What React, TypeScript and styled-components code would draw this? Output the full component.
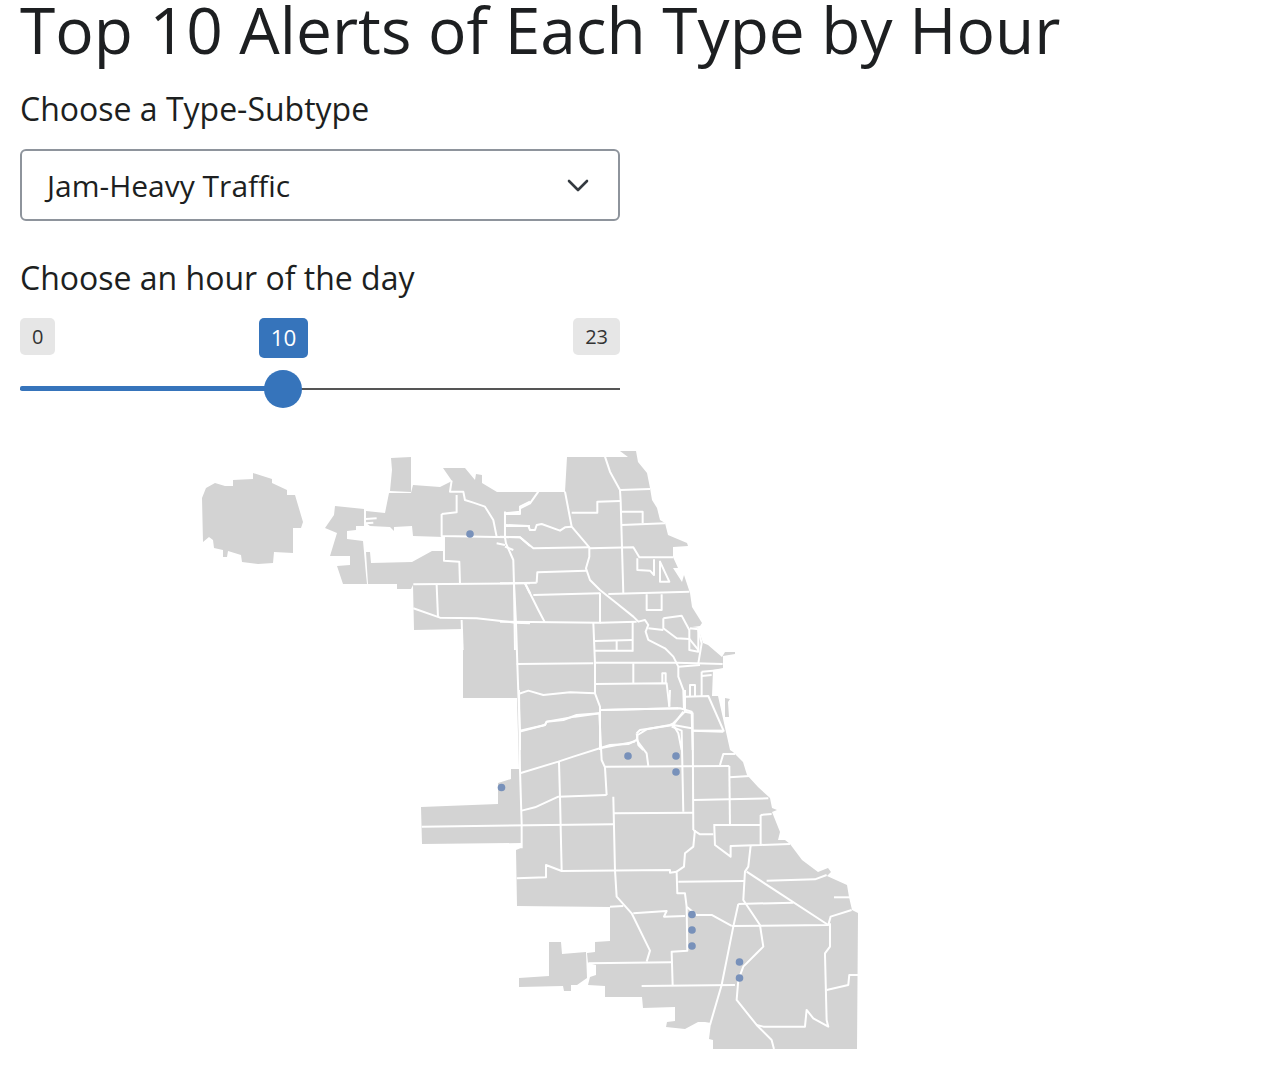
import styled, { createGlobalStyle } from 'styled-components';

const GlobalStyle = createGlobalStyle`
  html, body {
    margin: 0;
    padding: 0;
    background: #fff;
    color: #1d1f21;
    font-family: "Open Sans", "Noto Sans", sans-serif;
  }
`

const Page = styled.div`
  width: 1272px;
  height: 1068px;
  padding: 0 20px;
  box-sizing: border-box;
  overflow: hidden;
`
const Title = styled.h1`
  margin: 0;
  height: 93px;
  font-size: 64px;
  line-height: 60px;
  font-weight: 400;
  white-space: nowrap;
`
const Field = styled.div`
  width: 600px;
  display: flex;
  flex-direction: column;
`
const Label = styled.label`
  font-size: 32px;
  line-height: 32px;
  height: 32px;
  white-space: nowrap;
`
const SelectBox = styled.div`
  margin-top: 24px;
  height: 72px;
  box-sizing: border-box;
  border: 2px solid #8e949c;
  border-radius: 6px;
  padding: 0 28px 0 25px;
  display: flex;
  align-items: center;
  justify-content: space-between;
  font-size: 30px;
`
const HourField = styled(Field)`
  margin-top: 41px;
`
const Slider = styled.div`
  position: relative;
  margin-top: 24px;
  height: 72px;
`
const Bubbles = styled.div`
  display: flex;
  justify-content: space-between;
  align-items: flex-start;
`
const Bubble = styled.span`
  height: 37px;
  padding: 0 12px;
  box-sizing: border-box;
  border-radius: 5px;
  background: #e6e6e6;
  color: #333;
  font-size: 20px;
  line-height: 37px;
`
const ValueBubble = styled.span`
  position: absolute;
  top: 0;
  left: 239px;
  width: 49px;
  height: 40px;
  border-radius: 5px;
  background: #3674bb;
  color: #fff;
  font-size: 22.4px;
  line-height: 40px;
  text-align: center;
`
const Track = styled.div`
  position: absolute;
  left: 0;
  right: 0;
  top: 70px;
  height: 2px;
  background: #555;
`
const Fill = styled.div`
  position: absolute;
  left: 0;
  top: 68px;
  height: 5px;
  border-radius: 2px;
  background: #3674bb;
`
const Thumb = styled.div`
  position: absolute;
  top: 52px;
  left: 244px;
  width: 38px;
  height: 38px;
  border-radius: 50%;
  background: #3674bb;
`
const MapFigure = styled.svg`
  display: block;
  margin: 50px 0 0 170px;
`

const Chevron = () => (
  <svg width="24" height="24" viewBox="0 0 24 24" fill="none" stroke="#343a40" strokeWidth="2.6" strokeLinecap="round" strokeLinejoin="round">
    <path d="M3 8l9 9 9-9" />
  </svg>
)

// outline of the city, in page coordinates
const body =
  'M443 468 457 468 465 468 475 480 476 474 482 475 482 483 497 492 538 492 565 492 567 457 605 457 628 457 620 451 636 451 638 462 647 473 650 488 652 500 657 508 660 520 665 523 668 535 687 543 688 546 673 547 673 557 678 568 673 568 682 582 684 575 690 593 692 607 702 623 700 626 692 627 698 628 703 643 708 645 722 657 725 652 735 652 735 654 723 656 723 668 713 670 712 696 718 696 730 750 733 752 743 762 747 775 758 787 770 798 772 808 777 810 772 812 780 832 778 840 785 840 790 844 802 860 818 872 828 868 831 872 827 876 847 885 849 897 852 910 858 913 857 1049 713 1049 713 1040 709 1039 711 1023 705 1022 698 1022 685 1029 666 1027 667 1022 675 1021 675 1007 643 1008 642 997 605 997 605 986 588 985 590 977 596 975 596 965 588 963 587 953 595 952 595 942 610 941 610 907 517 906 516 850 521 848 521 843 422 844 421 807 498 804 498 783 511 779 511 769 519 769 517 698 463 698 463 629 414 630 413 585 411 589 397 589 397 584 368 584 366 552 370 552 371 563 412 562 432 551 443 551 444 537 413 536 412 526 394 527 394 531 390 527 370 526 366 523 366 511 385 513 389 493 411 493 413 485 440 487 452 481Z'
const westPark =
  'M202 498 206 488 215 483 225 486 233 486 233 480 253 479 253 473 272 479 272 483 287 490 287 495 295 495 303 522 301 528 293 528 293 553 274 552 273 563 258 564 242 562 241 555 228 551 227 557 223 557 223 550 214 548 213 540 209 537 203 542Z'
const westBlob =
  'M335 506 364 509 364 526 356 526 356 530 347 531 347 539 363 541 364 552 366 575 367 584 343 584 337 566 350 565 350 556 330 556 337 533 325 528 334 515Z'
const northBlock = 'M391 458 411 457 411 492 390 491 392 470Z'
const sliver = 'M725 698 730 699 728 702 729 717 725 717Z'
const southwestBlob = 'M519 978 549 976 549 942 561 942 562 954 586 952 587 978 577 985 571 985 571 991 564 991 563 986 519 987Z'

// street lines traced in 3x crops, one group per crop
const westLines = [
  'M785 122 780 155 820 155 825 180 850 188 885 200 910 240 920 290',
  'M755 222 800 217 800 165',
  'M755 222 755 288 990 292 1020 318',
  'M762 290 762 362 808 365 810 430',
  'M670 433 1020 430',
  'M740 435 744 530',
  'M670 505 750 533 860 535 975 548 1020 550',
  'M815 540 818 630',
  'M945 215 945 292 948 310 970 360 972 430 975 630',
  'M945 220 990 215 990 200 1020 185',
  'M945 258 1020 258',
  'M920 310 945 315',
  'M945 320 970 330',
  'M1005 430 1020 460',
  'M527 237 560 235',
  'M527 250 550 248',
]
const northLines = [
  'M115 155 90 190 60 205 60 222 15 222',
  'M15 215 15 295',
  'M15 255 85 258 90 270 105 270 110 255 125 252 180 272 195 262 215 260',
  'M195 155 215 260 268 322 268 350 258 385 270 420 300 450 350 490 400 530 415 545 435 540 445 555 437 575 445 600 495 625 520 650 535 680 535 710 550 750 552 810',
  'M0 290 60 292 100 325 268 322',
  'M215 218 292 218 292 185 360 183',
  'M315 50 330 95 360 150 362 183 370 460',
  'M360 150 450 147',
  'M365 215 428 215 428 250',
  'M365 255 495 250',
  'M268 325 400 322 418 352 520 352',
  'M412 355 412 390 450 392 462 405 462 358',
  'M480 365 480 425 508 425Z',
  'M110 428 112 397 258 392',
  'M0 430 110 428',
  'M300 458 300 548 0 545',
  'M100 465 300 460',
  'M75 430 115 510 135 548',
  'M325 462 568 455',
  'M440 463 440 510 485 510 485 463',
  'M300 548 410 545',
  'M280 548 285 670 285 760 300 800 300 930',
  'M285 603 398 600',
  'M350 603 350 632',
  'M285 632 398 632',
  'M398 545 398 635',
  'M285 668 530 668 668 672',
  'M50 672 280 670',
  'M490 535 545 527 568 570 568 630 595 635 595 568 570 565',
  'M490 535 490 565 530 595 568 597 595 630',
  'M445 565 490 570',
  'M595 570 605 610 595 670',
  'M400 670 400 730',
  'M285 732 500 730 508 800',
  'M487 730 487 700 497 700 497 730',
  'M605 695 665 690',
  'M605 708 635 705',
  'M605 695 605 768',
  'M570 768 570 735 585 735 585 768',
  'M555 770 625 768 672 875',
  'M535 680 600 675',
  'M300 810 540 805 575 815 578 930',
  'M520 855 550 815',
  'M520 855 575 865',
  'M580 872 670 872',
  'M410 880 420 870 520 855 535 880 545 930',
  'M410 880 415 915 430 930',
  'M300 925 405 905',
  'M55 762 85 752 130 765 210 757 285 760',
  'M60 875 135 855 140 845 225 830 300 820',
  'M42 430 48 550 52 672 55 760 60 875 60 930',
]
const southLines = [
  'M327 0 330 240 335 400 335 475',
  'M330 122 405 105 410 95 460 90 500 75 568 70',
  'M330 250 445 215 490 200 600 165 655 162 680 150',
  'M568 70 575 210 585 232 590 315',
  'M575 60 805 55',
  'M780 0 778 50',
  'M825 0 825 65 790 100 780 105 710 118 683 135 680 150 710 190 715 228',
  'M825 65 848 70 850 420',
  'M785 110 815 122 820 365',
  'M848 122 940 125',
  'M585 230 958 228',
  'M930 225 940 192 975 192',
  'M958 228 960 405',
  'M958 262 1020 258',
  'M850 330 1075 325',
  'M910 405 1050 405',
  'M1052 375 1052 465 962 468 962 500 915 465 913 408',
  'M1052 375 1085 372',
  'M1052 465 1140 462',
  'M1022 468 1015 530 1005 545 1000 630 1050 705 1060 770 1040 790 1000 830 985 870 980 930 1040 1005 1085 1050 1092 1077',
  'M1010 545 1255 705',
  'M850 420 870 433 910 433',
  'M855 420 850 470 825 490 822 530 800 545 802 610 825 610 830 650 860 675 905 675 965 708',
  'M805 575 1005 573',
  'M1070 572 1215 568 1250 555',
  'M1272 622 1320 622',
  'M985 642 1150 638',
  'M985 642 970 710 935 885 900 1005',
  'M965 708 1255 705 1262 680 1325 660',
  'M1260 700 1260 770 1245 790 1250 990 1255 1010 1210 985 1190 960 1185 1010 1060 1010 1040 1005',
  'M1345 855 1318 855 1315 885 1250 900',
  'M830 650 832 782 785 785 788 885',
  'M670 670 770 663 762 680 825 678',
  'M610 370 850 368',
  'M610 320 615 540 620 620 665 670 720 782 710 815',
  'M447 215 450 320 455 540',
  'M590 315 445 320 375 352 335 362',
  'M35 410 610 403',
  'M320 565 408 562 408 525 455 543 780 540 780 548 800 545',
  'M535 820 785 817',
  'M695 888 975 885',
  'M600 650 640 648',
]

const alerts = [
  [470, 534],
  [628, 756],
  [676, 756],
  [676, 772],
  [501.5, 787.5],
  [692, 914.5],
  [692, 930],
  [692, 946],
  [739.5, 962],
  [739.5, 978],
]

const LineGroup = ({ lines, x, y }: { lines: string[]; x: number; y: number }) => (
  <g transform={`translate(${x} ${y}) scale(0.3333)`} fill="none" stroke="#fff" strokeWidth="6" strokeLinejoin="round">
    {lines.map((d) => (
      <path key={d} d={d} />
    ))}
  </g>
)

const ChicagoMap = () => (
  <MapFigure width="680" height="620" viewBox="190 440 680 620">
    <g fill="#d3d3d3">
      <path d={body} />
      <path d={westPark} />
      <path d={westBlob} />
      <path d={northBlock} />
      <path d={sliver} />
      <path d={southwestBlob} />
    </g>
    <LineGroup lines={westLines} x={190} y={440} />
    <LineGroup lines={northLines} x={500} y={440} />
    <LineGroup lines={southLines} x={410} y={690} />
    <g fill="#7891ba">
      {alerts.map(([cx, cy]) => (
        <circle key={`${cx}-${cy}`} cx={cx} cy={cy} r="3.8" />
      ))}
    </g>
  </MapFigure>
)

const App = () => {
  return (
    <Page>
      <GlobalStyle />
      <Title>Top 10 Alerts of Each Type by Hour</Title>
      <Field>
        <Label>Choose a Type-Subtype</Label>
        <SelectBox>
          Jam-Heavy Traffic
          <Chevron />
        </SelectBox>
      </Field>
      <HourField>
        <Label>Choose an hour of the day</Label>
        <Slider>
          <Bubbles>
            <Bubble>0</Bubble>
            <Bubble>23</Bubble>
          </Bubbles>
          <ValueBubble>10</ValueBubble>
          <Track />
          <Fill style={{ width: `${(10 / 23) * 600}px` }} />
          <Thumb />
        </Slider>
      </HourField>
      <ChicagoMap />
    </Page>
  )
}

export default App
